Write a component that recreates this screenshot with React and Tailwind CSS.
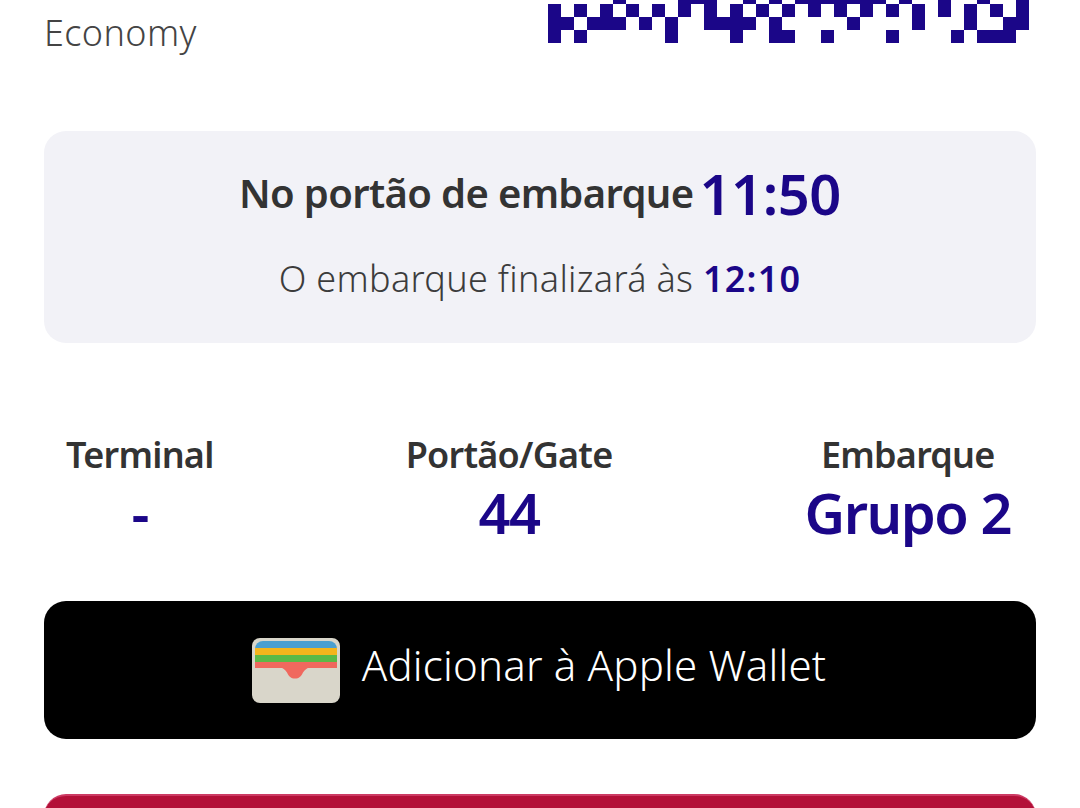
import React from "react";

const QR_ROWS = [
  [5, 10, 11, 12, 15, 17, 19, 20, 21, 22, 23, 24, 25, 27, 30, 33, 36],
  [0, 2, 4, 6, 8, 10, 12, 14, 16, 18, 20, 22, 24, 26, 28, 30, 32, 34, 36],
  [0, 1, 3, 4, 5, 7, 9, 12, 13, 14, 15, 17, 23, 28, 32, 35, 36],
  [0, 2, 9, 14, 17, 18, 21, 26, 31, 33, 34, 35],
];

const QrStrip = () => (
  <svg width="481" height="43" viewBox="0 9 481 43" className="block" shapeRendering="crispEdges">
    {QR_ROWS.map((row, y) =>
      row.map((x) => (
        <rect key={`${x}-${y}`} x={x * 13} y={y * 13} width="13" height="13" fill="#1b0688" />
      ))
    )}
  </svg>
);

const WalletIcon = () => (
  <svg width="88" height="65" viewBox="0 0 88 65" className="block">
    <rect width="88" height="65" rx="8" fill="#d9d6ca" />
    <path d="M3 11a8 8 0 0 1 8-8h66a8 8 0 0 1 8 8v1H3z" fill="#4a9fd0" />
    <path d="M3 10h82v8H3z" fill="#f5b51c" />
    <path d="M3 17h82v8H3z" fill="#5cb947" />
    <path d="M3 24h82v6H3z" fill="#f0685e" />
    <path d="M27 29.5h32c-4 0-6 2-8 5-2 4-4 6-8 6s-6-2-8-6c-2-3-4-5-8-5z" fill="#f0685e" />
  </svg>
);

const InfoColumn = ({ label, value }) => (
  <div className="flex flex-col items-center">
    <span className="text-[36px] leading-[44px] font-semibold text-[#333333] tracking-[-0.75px]">{label}</span>
    <span className="mt-[1px] text-[56px] leading-[68px] font-semibold text-[#1b0688] tracking-[-1.5px]">{value}</span>
  </div>
);

export default function App() {
  return (
    <div
      className="h-[808px] overflow-hidden bg-white px-[44px]"
      style={{ fontFamily: '"Noto Sans", sans-serif' }}
    >
      <div className="flex justify-between pr-[7px]">
        <span className="mt-[8px] text-[36px] leading-[50px] font-light text-[#444444] tracking-[0.4px]">Economy</span>
        <QrStrip />
      </div>

      <div className="mt-[73px] h-[212px] rounded-[22px] bg-[#f2f2f7] flex flex-col items-center pt-[28px]">
        <div className="flex items-center gap-[6px] h-[68px]">
          <span className="text-[40px] font-semibold text-[#333333] tracking-[-0.66px]">No portão de embarque</span>
          <span className="text-[56px] font-semibold text-[#1b0688] tracking-[-0.4px]">11:50</span>
        </div>
        <p className="mt-[27px] text-[36px] leading-[50px] font-light text-[#3c3c3c] tracking-[0.32px]">
          O embarque finalizará às <span className="font-semibold text-[#1b0688] tracking-[1.2px]">12:10</span>
        </p>
      </div>

      <div className="mt-[90px] flex justify-between pl-[22px] pr-[25px]">
        <InfoColumn label="Terminal" value="-" />
        <InfoColumn label="Portão/Gate" value="44" />
        <InfoColumn label="Embarque" value="Grupo 2" />
      </div>

      <button className="mt-[55px] w-full h-[138px] rounded-[22px] bg-black flex items-center justify-center gap-[22px] pr-[2px]">
        <WalletIcon />
        <span className="pb-[12px] text-[42px] font-light text-white tracking-[0.2px]">Adicionar à Apple Wallet</span>
      </button>

      <div className="mt-[55px] h-[60px] rounded-t-[22px] bg-[#b31038] border-t-2 border-[#cc3a63]" />
    </div>
  );
}
